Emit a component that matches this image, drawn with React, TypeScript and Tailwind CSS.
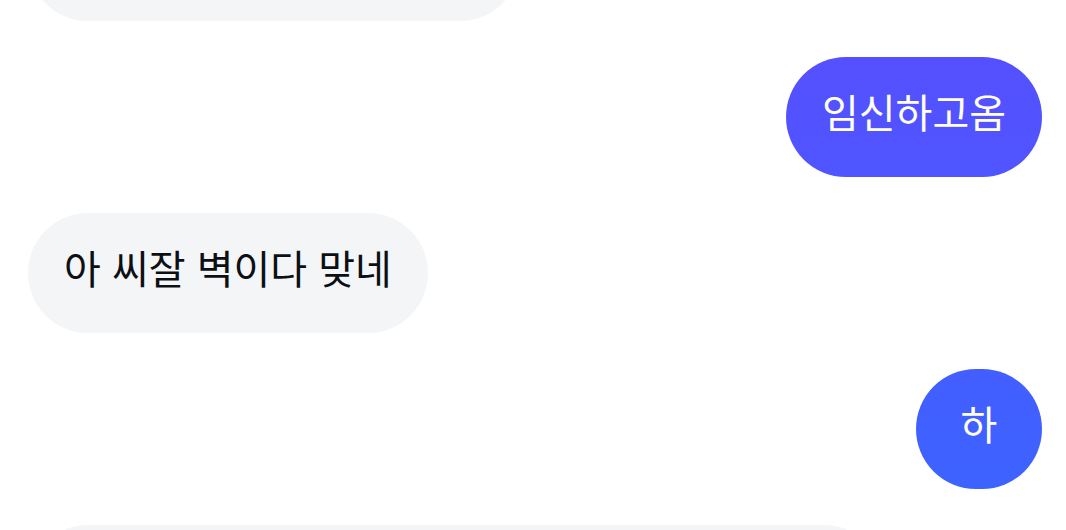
const messages = [
  { id: 1, mine: false, text: "", style: "w-[492px] bg-[#f3f5f7]" },
  { id: 2, mine: true, text: "임신하고옴", style: "bg-linear-to-b from-[#5550ff] to-[#4f55ff] text-white" },
  { id: 3, mine: false, text: "아 씨잘 벽이다 맞네", style: "bg-[#f3f5f7] text-[#0c1014]" },
  { id: 4, mine: true, text: "하", style: "min-w-[126px] bg-linear-to-b from-[#435eff] to-[#3d63ff] text-white" },
  { id: 5, mine: false, text: "", style: "w-[856px] bg-[#f3f5f7]" },
];

const Bubble = ({ mine, text, style }: any) => {
  return (
    <li className={mine ? "flex justify-end" : "flex justify-start"}>
      <p
        className={`h-[120px] shrink-0 rounded-[60px] px-9 pt-6 text-center text-[40px] leading-[66px] whitespace-nowrap ${style}`}
      >
        {text}
      </p>
    </li>
  );
};

export default function App() {
  return (
    <main className="h-screen overflow-hidden bg-white font-['Liberation_Sans','Noto_Sans_CJK_KR',sans-serif]">
      {/* scrolled so that the oldest message is cut off at the top */}
      <ul className="-mt-[99px] flex flex-col gap-9 pr-6 pl-7">
        {messages.map((message) => (
          <Bubble key={message.id} {...message} />
        ))}
      </ul>
    </main>
  );
}
